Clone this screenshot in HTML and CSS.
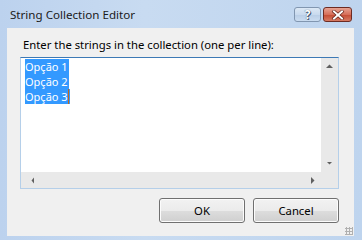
FILE: index.html
```
<!DOCTYPE html>
<html>
<head>
<meta charset="utf-8">
<link rel="stylesheet" href="styles.css">
</head>
<body>
<div class="window">
  <div class="titlebar">
    <span class="title">String Collection Editor</span>
    <div class="caption-buttons">
      <div class="cbtn help"><span class="q">?</span></div>
      <div class="cbtn close">
        <svg width="14" height="10" viewBox="0 0 14 10"><path d="M3 1.5 L11 8.5 M11 1.5 L3 8.5" stroke="#5a1a10" stroke-width="3.2" stroke-linecap="square"/><path d="M3 1.5 L11 8.5 M11 1.5 L3 8.5" stroke="#fff" stroke-width="2" stroke-linecap="square"/></svg>
      </div>
    </div>
  </div>
  <div class="client">
    <div class="label">Enter the strings in the collection (one per line):</div>
    <div class="textbox">
      <div class="text-area">
        <div class="sel">Opção 1</div>
        <div class="sel">Opção 2</div>
        <div class="sel">Opção 3<span class="caret"></span></div>
      </div>
      <div class="vscroll">
        <svg width="17" height="17" viewBox="0 0 17 17"><path d="M5 10 L8.5 6.5 L12 10 Z" fill="#606060"/></svg>
        <svg width="17" height="17" viewBox="0 0 17 17"><path d="M6 7 L8.5 9.5 L11 7 Z" fill="#606060"/></svg>
      </div>
      <div class="hscroll">
        <svg width="17" height="17" viewBox="0 0 17 17"><path d="M9 5.5 L6.5 8.5 L9 11.5 Z" fill="#606060"/></svg>
        <svg width="17" height="17" viewBox="0 0 17 17"><path d="M7 5 L10.5 8.5 L7 12 Z" fill="#606060"/></svg>
      </div>
      <div class="corner"></div>
    </div>
    <div class="buttons">
      <button class="btn">OK</button>
      <button class="btn">Cancel</button>
    </div>
  </div>
  <div class="grip"></div>
</div>
</body>
</html>
```
FILE: styles.css
```
body {
  margin: 0;
  font-family: "Noto Sans", "Open Sans", sans-serif;
  font-size: 11.3px;
}

.window {
  position: relative;
  width: 362px;
  height: 240px;
  box-sizing: border-box;
  background: linear-gradient(90deg, #bcd2ee, #c8dbf1 40%, #bed4ee);
  display: flex;
  flex-direction: column;
  padding: 0 8px 4px 7px;
}

.titlebar {
  height: 28px;
  display: flex;
  align-items: flex-start;
  flex-shrink: 0;
}

.title {
  margin-top: 7px;
  margin-left: 3px;
  color: #1a1a1a;
  line-height: 16px;
  font-size: 11.6px;
}

.caption-buttons {
  margin-left: auto;
  margin-top: 7px;
  margin-right: 2px;
  display: flex;
  gap: 2px;
}

.cbtn {
  width: 27px;
  height: 15px;
  border-radius: 3px;
  display: flex;
  align-items: center;
  justify-content: center;
  box-sizing: border-box;
}

.help {
  border: 1px solid #8196b0;
  background: linear-gradient(#dce8f5, #c9daee 50%, #b9cde6 51%, #cadcf0);
}

.help .q {
  color: #fff;
  font-weight: bold;
  font-size: 12px;
  line-height: 12px;
  text-shadow: 0 0 1px #2c3e58, 1px 1px 0 #4a5c78;
}

.close {
  width: 29px;
  border: 1px solid #6d2b22;
  background: linear-gradient(#e7a393, #d66f5a 50%, #c44a32 51%, #d67a63);
}

.client {
  flex: 1;
  background: #f0f0f0;
  display: flex;
  flex-direction: column;
  padding: 9px 15px 13px 13px;
}

.label {
  padding-left: 3px;
  line-height: 16px;
  color: #000;
}

.textbox {
  margin-top: 4px;
  height: 132px;
  box-sizing: border-box;
  border: 1px solid #b5cfe9;
  border-top-color: #3d79b5;
  display: grid;
  grid-template-columns: 1fr 17px;
  grid-template-rows: 1fr 16px;
}

.text-area {
  background: #fff;
  padding: 1px 0 0 4px;
}

.sel {
  width: fit-content;
  height: 15px;
  background: #3399ff;
  color: #fff;
  font-size: 11px;
  line-height: 15px;
  padding-right: 1px;
}

.caret {
  display: inline-block;
  width: 1px;
  height: 15px;
  background: #c26a1c;
  vertical-align: top;
}

.vscroll {
  background: #e9e9e9;
  display: flex;
  flex-direction: column;
  justify-content: space-between;
}

.hscroll {
  background: #e9e9e9;
  display: flex;
  justify-content: space-between;
  align-items: center;
  padding-left: 4px;
}

.corner {
  background: #e9e9e9;
}

.buttons {
  margin-top: auto;
  display: flex;
  justify-content: flex-end;
  gap: 8px;
}

.btn {
  width: 86px;
  height: 25px;
  border: 1px solid #707070;
  border-radius: 3px;
  background: linear-gradient(#f2f2f2, #ebebeb 50%, #dddddd 51%, #cfcfcf);
  font-family: "Noto Sans", "Open Sans", sans-serif;
  font-size: 11.3px;
  color: #000;
  padding: 0;
  box-shadow: inset 0 0 0 1px #fcfcfc;
}

.grip {
  position: absolute;
  right: 9px;
  bottom: 5px;
  width: 8px;
  height: 8px;
  background: radial-gradient(circle, #b0b0b0 1px, transparent 1.2px) 0 0 / 3px 3px;
}
```
